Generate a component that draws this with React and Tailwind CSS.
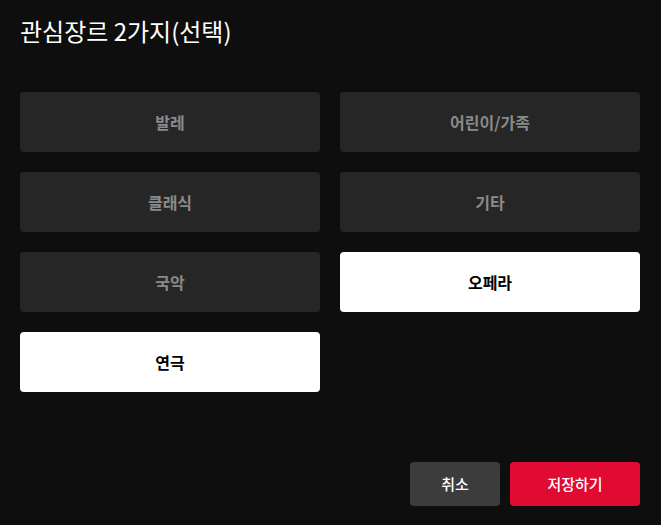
import React, { useState } from "react";

const genres = ["발레", "어린이/가족", "클래식", "기타", "국악", "오페라", "연극"];

const App = () => {
  const [selected, setSelected] = useState(["오페라", "연극"]);

  const toggle = (g) => {
    setSelected((prev) => (prev.includes(g) ? prev.filter((x) => x !== g) : [...prev, g]));
  };

  return (
    <div
      className="w-[661px] h-[525px] bg-[#0e0e0e] pl-5 pr-[21px] pt-[14px] pb-[19px] flex flex-col"
      style={{ fontFamily: '"Noto Sans CJK KR", "Noto Sans", sans-serif' }}
    >
      <h1 className="text-[24px] leading-[34px] font-normal text-white">관심장르 2가지(선택)</h1>

      <div className="grid grid-cols-2 gap-5 mt-[44px]">
        {genres.map((g) => {
          const on = selected.includes(g);
          return (
            <button
              key={g}
              onClick={() => toggle(g)}
              className={`h-[60px] rounded-[4px] text-[16px] font-bold ${
                on ? "bg-white text-black" : "bg-[#262626] text-[#8a8a8a]"
              }`}
            >
              {g}
            </button>
          );
        })}
      </div>

      <div className="mt-auto flex justify-end gap-[10px]">
        <button className="w-[90px] h-[44px] rounded-[4px] bg-[#3c3c3c] text-white text-[15px] font-medium">
          취소
        </button>
        <button className="w-[130px] h-[44px] rounded-[4px] bg-[#e00a32] text-white text-[15px] font-medium">
          저장하기
        </button>
      </div>
    </div>
  );
};

export default App;
